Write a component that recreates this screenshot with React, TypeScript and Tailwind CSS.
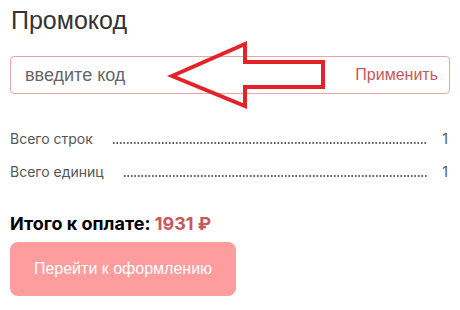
const sans = { fontFamily: '"Liberation Sans", Arial, sans-serif' }
const inter = { fontFamily: 'Inter, "Liberation Sans", sans-serif' }

function SummaryRow({ label, value }: { label: string, value: string }) {
  return (
    <div className="flex h-[33px] items-center text-[14px] text-[#555]" style={inter}>
      <div className="flex w-full items-baseline">
        <span className="shrink-0">{label}</span>
        <div className="ml-[19px] mr-[15px] h-[2px] flex-1 bg-[radial-gradient(circle,#666_35%,transparent_50%)] bg-[length:3.5px_2px] bg-repeat-x" />
        <span className="shrink-0 pr-[2px]">{value}</span>
      </div>
    </div>
  )
}

function Arrow() {
  return (
    <svg className="pointer-events-none absolute left-0 top-0" width="460" height="120" viewBox="0 0 460 120">
      <polygon
        points="172,76 245,44 245,62 323,62 323,87 245,87 245,106"
        fill="none"
        stroke="#e3222a"
        strokeWidth="4"
        strokeLinejoin="miter"
      />
    </svg>
  )
}

export default function App() {
  return (
    <div className="relative h-[310px] w-[460px] overflow-hidden bg-white px-[10px]">
      <h2 className="pl-[1px] pt-[6px] text-[25px] leading-[28px] text-[#333]" style={sans}>Промокод</h2>

      <div className="mt-[22px] flex h-[38px] items-center justify-between rounded-[4px] border border-[#eba5a5] pl-[14px] pr-[11px]" style={sans}>
        <span className="text-[18px] text-[#666]">введите код</span>
        <span className="text-[16px] text-[#c9575b]">Применить</span>
      </div>

      <div className="mt-[28px]">
        <SummaryRow label="Всего строк" value="1" />
        <SummaryRow label="Всего единиц" value="1" />
      </div>

      <div className="mt-[25px] text-[18px] font-bold leading-[21px] text-black" style={inter}>
        Итого к оплате:
        {' '}
        <span className="text-[#c9575b]">1931 ₽</span>
      </div>

      <button className="mt-[8px] flex h-[54px] w-[226px] items-center justify-center rounded-[8px] bg-[#fd9d9d] text-[16px] text-white" style={sans}>
        Перейти к оформлению
      </button>

      <Arrow />
    </div>
  )
}
